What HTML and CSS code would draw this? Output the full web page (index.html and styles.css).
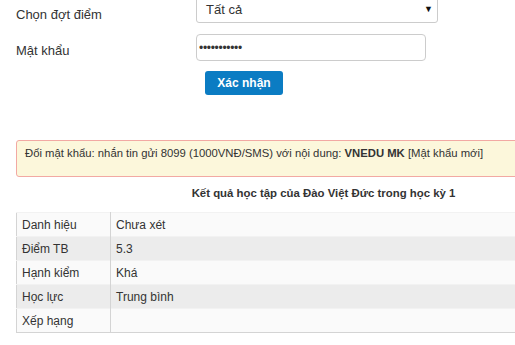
FILE: index.html
```html
<!DOCTYPE html>
<html lang="vi">
<head>
    <meta charset="UTF-8">
    <meta name="viewport" content="width=device-width, initial-scale=1.0">
    <title>Kết quả học tập</title>
    <link rel="stylesheet" href="styles.css">
</head>
<body>
    <div id="page">
        <div class="form-row row-term">
            <label class="form-label" for="term">Chọn đợt điểm</label>
            <div class="select-box" id="term">
                <span>Tất cả</span>
                <span class="caret">&#9660;</span>
            </div>
        </div>
        <div class="form-row row-pass">
            <label class="form-label" for="pass">Mật khẩu</label>
            <input class="text-input" id="pass" type="password" value="12345678901">
        </div>
        <div class="form-actions">
            <button class="btn-primary">Xác nhận</button>
        </div>

        <div class="alert">
            Đổi mật khẩu: nhắn tin gửi 8099 (1000VNĐ/SMS) với nội dung: <b>VNEDU MK</b> [Mật khẩu mới]
        </div>

        <h4 class="result-title">Kết quả học tập của Đào Việt Đức trong học kỳ 1</h4>

        <table class="result-table">
            <tr><td class="col-name">Danh hiệu</td><td>Chưa xét</td></tr>
            <tr><td class="col-name">Điểm TB</td><td>5.3</td></tr>
            <tr><td class="col-name">Hạnh kiểm</td><td>Khá</td></tr>
            <tr><td class="col-name">Học lực</td><td>Trung bình</td></tr>
            <tr><td class="col-name">Xếp hạng</td><td></td></tr>
        </table>
    </div>
</body>
</html>
```
FILE: styles.css
```css
body {
    font-family: 'Liberation Sans', Arial, sans-serif;
    font-size: 12px;
    color: #333;
    background: #fff;
    margin: 0;
    overflow: hidden;
}

#page {
    width: 615px;
    padding-left: 16px;
    margin-top: -5px;
}

.form-row {
    display: flex;
    align-items: flex-start;
}

.form-label {
    width: 180px;
    line-height: 16px;
    font-size: 13px;
}

.row-term .form-label {
    padding-top: 12px;
}

.row-pass {
    margin-top: 11px;
}

.row-pass .form-label {
    padding-top: 9px;
}

.select-box {
    width: 242px;
    height: 28px;
    box-sizing: border-box;
    border: 1px solid #ccc;
    border-radius: 3px;
    display: flex;
    align-items: center;
    justify-content: space-between;
    padding: 0 4px 0 9px;
    font-size: 13px;
}

.caret {
    font-size: 9px;
    color: #111;
}

.text-input {
    width: 230px;
    height: 27px;
    box-sizing: border-box;
    border: 1px solid #ccc;
    border-radius: 4px;
    margin: 0;
    padding: 0 2px;
    font-family: 'Liberation Sans', Arial, sans-serif;
    font-size: 12px;
    letter-spacing: -0.3px;
    color: #333;
}

.form-actions {
    margin-top: 10px;
    padding-left: 189px;
}

.btn-primary {
    width: 78px;
    height: 24px;
    border: none;
    border-radius: 3px;
    background: #0b7cc3;
    color: #fff;
    font-family: 'Liberation Sans', Arial, sans-serif;
    font-size: 12px;
    font-weight: bold;
    padding: 0;
}

.alert {
    margin-top: 45px;
    height: 37px;
    box-sizing: border-box;
    border: 1px solid #f2a9a3;
    border-radius: 3px;
    background: #fcf7db;
    padding: 5px 8px;
    line-height: 15px;
    font-size: 11.3px;
}

.result-title {
    margin: 8px 0 0;
    text-align: center;
    font-size: 11.4px;
    line-height: 16px;
}

.result-table {
    margin-top: 11px;
    width: 100%;
    border-collapse: collapse;
    border: 1px solid #d4d4d4;
}

.result-table td {
    height: 23px;
    padding: 0 5px;
    border-top: 1px solid #f2f2f2;
    background: #fafafa;
}

.result-table tr:nth-child(even) td {
    background: #ececec;
}

.result-table .col-name {
    width: 83px;
    border-right: 1px solid #d4d4d4;
}
```
